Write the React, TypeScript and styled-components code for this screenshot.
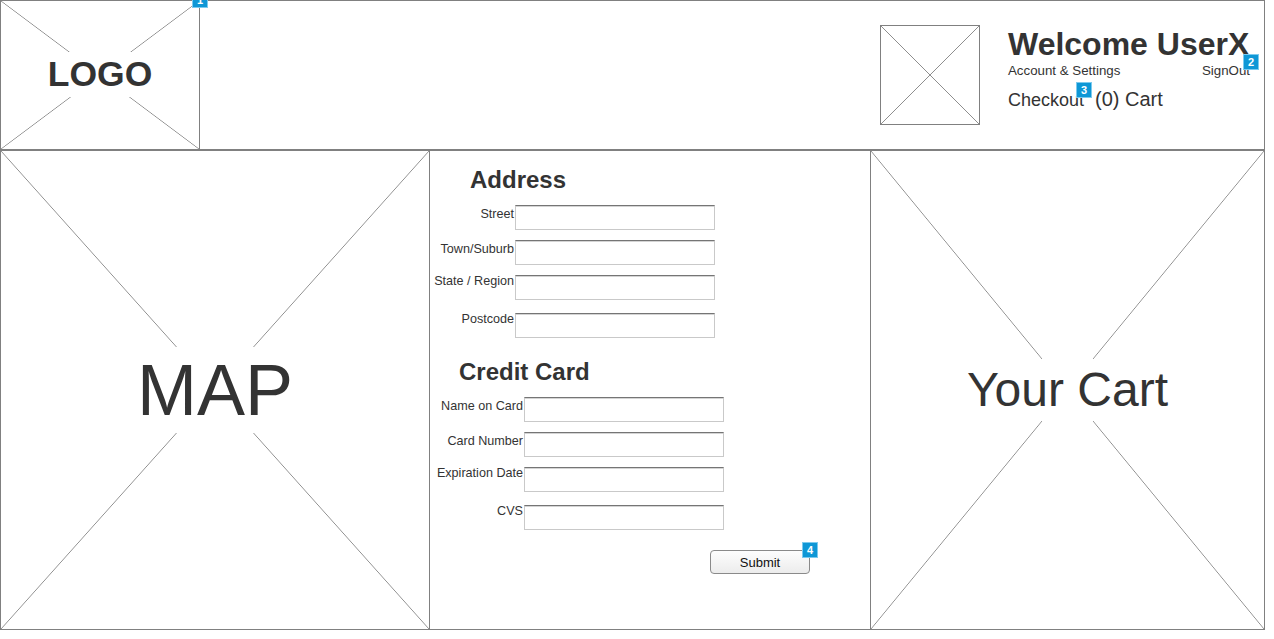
import React from "react";
import styled, { createGlobalStyle } from "styled-components";

const BORDER = "#808080";
const LINE = "#8e8e8e";
const TEXT = "#333333";

const GlobalStyle = createGlobalStyle`
  html, body { margin: 0; padding: 0; background: #ffffff; }
  body { font-family: "Liberation Sans", Arial, Helvetica, sans-serif; color: ${TEXT}; }
  * { box-sizing: border-box; }
`;

const cross = `
  background-color: #ffffff;
  background-image:
    linear-gradient(to top right, transparent calc(50% - 0.7px), ${LINE} 50%, transparent calc(50% + 0.7px)),
    linear-gradient(to bottom right, transparent calc(50% - 0.7px), ${LINE} 50%, transparent calc(50% + 0.7px));
`;

const Page = styled.div`
  width: 1265px;
  display: flex;
  flex-direction: column;
`;

const Header = styled.header`
  height: 150px;
  border: 1px solid ${BORDER};
  display: flex;
  align-items: stretch;
`;

const LogoBox = styled.div`
  position: relative;
  width: 199px;
  border-right: 1px solid ${BORDER};
  display: flex;
  align-items: center;
  justify-content: center;
  padding-bottom: 2px;
  ${cross}
`;

const PlaceholderText = styled.span<{ $size: number; $lh: number; $bold?: boolean }>`
  font-size: ${(p) => p.$size}px;
  line-height: ${(p) => p.$lh}px;
  font-weight: ${(p) => (p.$bold ? 700 : 400)};
  background: #ffffff;
  color: ${TEXT};
  white-space: nowrap;
`;

const Badge = styled.span<{ $top: number; $right: number }>`
  position: absolute;
  top: ${(p) => p.$top}px;
  right: ${(p) => p.$right}px;
  width: 16px;
  height: 16px;
  background: #0e97d6;
  border: 1px solid #7ccaee;
  color: #ffffff;
  font-size: 11px;
  font-weight: 700;
  line-height: 14px;
  text-align: center;
  z-index: 2;
`;

const UserArea = styled.div`
  margin-left: auto;
  display: flex;
  align-items: flex-start;
  gap: 28px;
  padding: 24px 14px 0 0;
`;

const Avatar = styled.div`
  width: 100px;
  height: 100px;
  border: 1px solid ${BORDER};
  ${cross}
`;

const UserBlock = styled.div`
  width: 242px;
  padding-top: 1px;
  display: flex;
  flex-direction: column;
`;

const Welcome = styled.div`
  font-size: 32px;
  line-height: 37px;
  font-weight: 700;
  white-space: nowrap;
  color: ${TEXT};
`;

const LinkRow = styled.div`
  display: flex;
  justify-content: space-between;
  font-size: 13.3px;
  line-height: 15px;
  color: ${TEXT};
`;

const CartRow = styled.div`
  margin-top: 11px;
  display: flex;
  align-items: baseline;
  gap: 11px;
  font-size: 18px;
  line-height: 21px;
  color: ${TEXT};
`;

const CartCount = styled.span`
  font-size: 20px;
  white-space: nowrap;
`;

const Tagged = styled.span`
  position: relative;
  white-space: nowrap;
`;

const Body = styled.main`
  display: flex;
  height: 480px;
`;

const SidePanel = styled.section<{ $width: number }>`
  width: ${(p) => p.$width}px;
  border: 1px solid ${BORDER};
  display: flex;
  align-items: center;
  justify-content: center;
  ${cross}
`;

const FormPanel = styled.section`
  width: 440px;
  border-top: 1px solid ${BORDER};
  border-bottom: 1px solid ${BORDER};
  display: flex;
  flex-direction: column;
  align-items: flex-start;
  padding-top: 15px;
`;

const SectionTitle = styled.h2<{ $indent: number; $top: number; $bottom: number }>`
  margin: ${(p) => p.$top}px 0 ${(p) => p.$bottom}px ${(p) => p.$indent}px;
  font-size: 24px;
  line-height: 28px;
  font-weight: 700;
  color: ${TEXT};
`;

const FieldRow = styled.label<{ $top: number }>`
  display: flex;
  align-items: flex-start;
  margin-top: ${(p) => p.$top}px;
`;

const FieldLabel = styled.span<{ $width: number; $offset: number }>`
  width: ${(p) => p.$width}px;
  text-align: right;
  font-size: 12.6px;
  line-height: 14px;
  padding-right: 1px;
  margin-top: ${(p) => p.$offset}px;
  white-space: nowrap;
  color: ${TEXT};
`;

const TextInput = styled.input`
  width: 200px;
  height: 25px;
  padding: 0 4px;
  margin: 0;
  border: 1px solid #c9c9c9;
  border-top-color: #757575;
  box-shadow: inset 0 1px 0 #d4d4d4;
  background: #ffffff;
  font-family: inherit;
  font-size: 13px;
  outline: none;
`;

const SubmitWrap = styled.div`
  position: relative;
  margin: 20px 0 0 280px;
`;

const SubmitButton = styled.button`
  width: 100px;
  height: 24px;
  border: 1px solid #8a8a8a;
  border-radius: 4px;
  background: linear-gradient(#fdfdfd, #ececec);
  font-family: inherit;
  font-size: 13px;
  color: #111;
  padding: 0;
`;

type Field = { label: string; gap: number; offset: number };

const addressFields: Field[] = [
  { label: "Street", gap: 0, offset: 2 },
  { label: "Town/Suburb", gap: 10, offset: 2 },
  { label: "State / Region", gap: 10, offset: -1 },
  { label: "Postcode", gap: 13, offset: -1 },
];

const cardFields: Field[] = [
  { label: "Name on Card", gap: 0, offset: 2 },
  { label: "Card Number", gap: 10, offset: 2 },
  { label: "Expiration Date", gap: 10, offset: -1 },
  { label: "CVS", gap: 13, offset: -1 },
];

const Fields = ({ fields, labelWidth }: { fields: Field[]; labelWidth: number }) => (
  <>
    {fields.map((f) => (
      <FieldRow key={f.label} $top={f.gap}>
        <FieldLabel $width={labelWidth} $offset={f.offset}>
          {f.label}
        </FieldLabel>
        <TextInput type="text" />
      </FieldRow>
    ))}
  </>
);

export default function App() {
  return (
    <>
      <GlobalStyle />
      <Page>
        <Header>
          <LogoBox>
            <PlaceholderText $size={35.5} $lh={45} $bold>
              LOGO
            </PlaceholderText>
            <Badge $top={-9} $right={-9}>1</Badge>
          </LogoBox>
          <UserArea>
            <Avatar />
            <UserBlock>
              <Welcome>Welcome UserX</Welcome>
              <LinkRow>
                <span>Account &amp; Settings</span>
                <Tagged>
                  SignOut
                  <Badge $top={-9} $right={-9}>2</Badge>
                </Tagged>
              </LinkRow>
              <CartRow>
                <Tagged>
                  Checkout
                  <Badge $top={-8} $right={-8}>3</Badge>
                </Tagged>
                <CartCount>(0) Cart</CartCount>
              </CartRow>
            </UserBlock>
          </UserArea>
        </Header>
        <Body>
          <SidePanel $width={430}>
            <PlaceholderText $size={72} $lh={86}>
              MAP
            </PlaceholderText>
          </SidePanel>
          <FormPanel>
            <SectionTitle $indent={40} $top={0} $bottom={11}>
              Address
            </SectionTitle>
            <Fields fields={addressFields} labelWidth={85} />
            <SectionTitle $indent={29} $top={20} $bottom={11}>
              Credit Card
            </SectionTitle>
            <Fields fields={cardFields} labelWidth={94} />
            <SubmitWrap>
              <SubmitButton type="button">Submit</SubmitButton>
              <Badge $top={-8} $right={-8}>4</Badge>
            </SubmitWrap>
          </FormPanel>
          <SidePanel $width={395}>
            <PlaceholderText $size={48} $lh={62}>
              Your Cart
            </PlaceholderText>
          </SidePanel>
        </Body>
      </Page>
    </>
  );
}
